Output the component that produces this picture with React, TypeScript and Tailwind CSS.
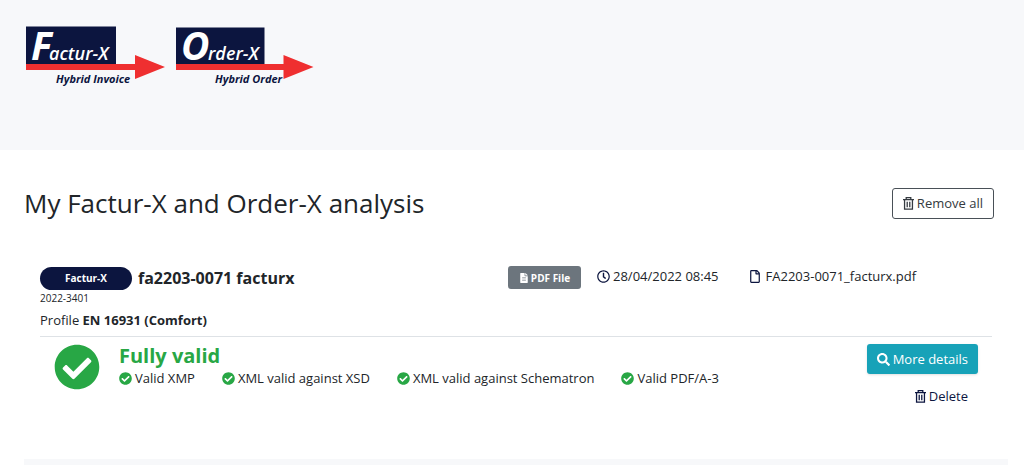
import { FaCheckCircle, FaFileAlt, FaRegClock, FaRegFile, FaSearch } from "react-icons/fa";

type LogoProps = { initial: string; rest: string; caption: string; boxWidth: number; boxTop: number; restX: number; captionX: number; tipX: number };

function Logo({ initial, rest, caption, boxWidth, boxTop, restX, captionX, tipX }: LogoProps) {
  return (
    <svg
      role="img"
      aria-label={`${initial}${rest} ${caption}`}
      viewBox="0 0 139 66"
      className="h-[66px] w-[139px] font-['Open_Sans',sans-serif] italic"
    >
      <rect x="0" y={boxTop} width={boxWidth} height={39 - boxTop} fill="#0c153f" />
      <path d={`M0 39H${tipX - 30}V30L${tipX} 42L${tipX - 30} 54V45H0Z`} fill="#ef2f30" />
      <text x="5" y="35" fontSize="39" fontWeight="700" fill="#fff">{initial}</text>
      <text x={restX} y="35" fontSize="18" fontWeight="600" fill="#fff">{rest}</text>
      <text x={captionX} y="58" fontSize="11" fontWeight="700" fill="#0c153f">{caption}</text>
    </svg>
  );
}

function TrashIcon() {
  return (
    <svg aria-hidden="true" viewBox="0 0 12 14" className="h-[13px] w-[11px] shrink-0" fill="none" stroke="currentColor" strokeWidth="1.4">
      <path d="M0 2.700H12M3.500 2.700V.7H8.500V2.700M1.700 2.700V13.200H10.300V2.700M4.600 5V11M7.400 5V11" />
    </svg>
  );
}

const checks = ["Valid XMP", "XML valid against XSD", "XML valid against Schematron", "Valid PDF/A-3"];

export default function App() {
  return (
    <div className="bg-white font-['Open_Sans',sans-serif] text-[13px] leading-5 text-[#212529]">
      <header className="flex h-[150px] items-start gap-[11px] bg-[#f7f8fa] px-[26px] pt-[25px]">
        <Logo initial="F" rest="actur-X" caption="Hybrid Invoice" boxWidth={90} boxTop={1.5} restX={23} captionX={30} tipX={139} />
        <Logo initial="O" rest="rder-X" caption="Hybrid Order" boxWidth={88.500} boxTop={2.5} restX={32} captionX={39} tipX={137.500} />
      </header>

      <main className="px-6 pt-[37px]">
        <div className="flex items-center justify-between pr-[6px]">
          <h1 className="text-[26px] leading-8">My Factur-X and Order-X analysis</h1>
          <button className="flex h-[31px] items-center gap-[3px] rounded-[3px] border border-[#495057] px-[10px] text-[#343a40]">
            <TrashIcon />
            Remove all
          </button>
        </div>

        <article className="px-4 pt-[47px] pr-2">
          <div className="flex items-start border-b border-[#dee2e6] pb-[6px]">
            <div className="min-w-0 flex-1">
              <div className="flex items-center gap-[6px]">
                <span className="flex h-[23px] w-[92px] items-center justify-center rounded-full bg-[#0c153f] text-[10px] font-bold text-white">Factur-X</span>
                <h2 className="text-[16px] leading-6 font-bold">fa2203-0071 facturx</h2>
              </div>
              <p className="text-[10px] leading-4">2022-3401</p>
              <p className="mt-1">Profile <strong>EN 16931 (Comfort)</strong></p>
            </div>
            <div className="flex w-[484px] items-start">
              <span className="flex h-[23px] w-[73px] items-center justify-center gap-[2px] rounded-[3px] bg-[#6c757d] text-[10px] font-bold text-white">
                <FaFileAlt className="size-[10px]" />
                PDF File
              </span>
              <span className="ml-4 flex items-center gap-[3px]">
                <FaRegClock className="size-[13px] text-[#0c153f]" />
                28/04/2022 08:45
              </span>
              <span className="ml-7 flex items-center gap-[3px]">
                <FaRegFile className="h-[13px] w-4 text-[#0c153f]" />
                FA2203-0071_facturx.pdf
              </span>
            </div>
          </div>

          <div className="flex items-start pt-[7px]">
            <FaCheckCircle className="ml-[14px] size-[46px] shrink-0 text-[#28a745]" />
            <div className="ml-[19px] flex-1">
              <h3 className="text-[20px] leading-6 font-bold text-[#28a745]">Fully valid</h3>
              <ul className="flex gap-[27px]">
                {checks.map((check) => (
                  <li key={check} className="flex items-center gap-[3px]">
                    <FaCheckCircle className="size-[13px] text-[#28a745]" />
                    {check}
                  </li>
                ))}
              </ul>
            </div>
            <div className="mr-[14px] flex flex-col items-end gap-[7px]">
              <button className="flex h-[30px] items-center gap-[3px] rounded-[3px] bg-[#17a2b8] px-[10px] text-white shadow-sm">
                <FaSearch className="size-[13px]" />
                More details
              </button>
              <button className="flex h-[30px] items-center gap-[3px] px-[10px] text-[#0c153f]">
                <TrashIcon />
                Delete
              </button>
            </div>
          </div>
        </article>
        <div className="mt-12 mr-[-8px] h-[6px] bg-[#f7f8fa]" />
      </main>
    </div>
  );
}
